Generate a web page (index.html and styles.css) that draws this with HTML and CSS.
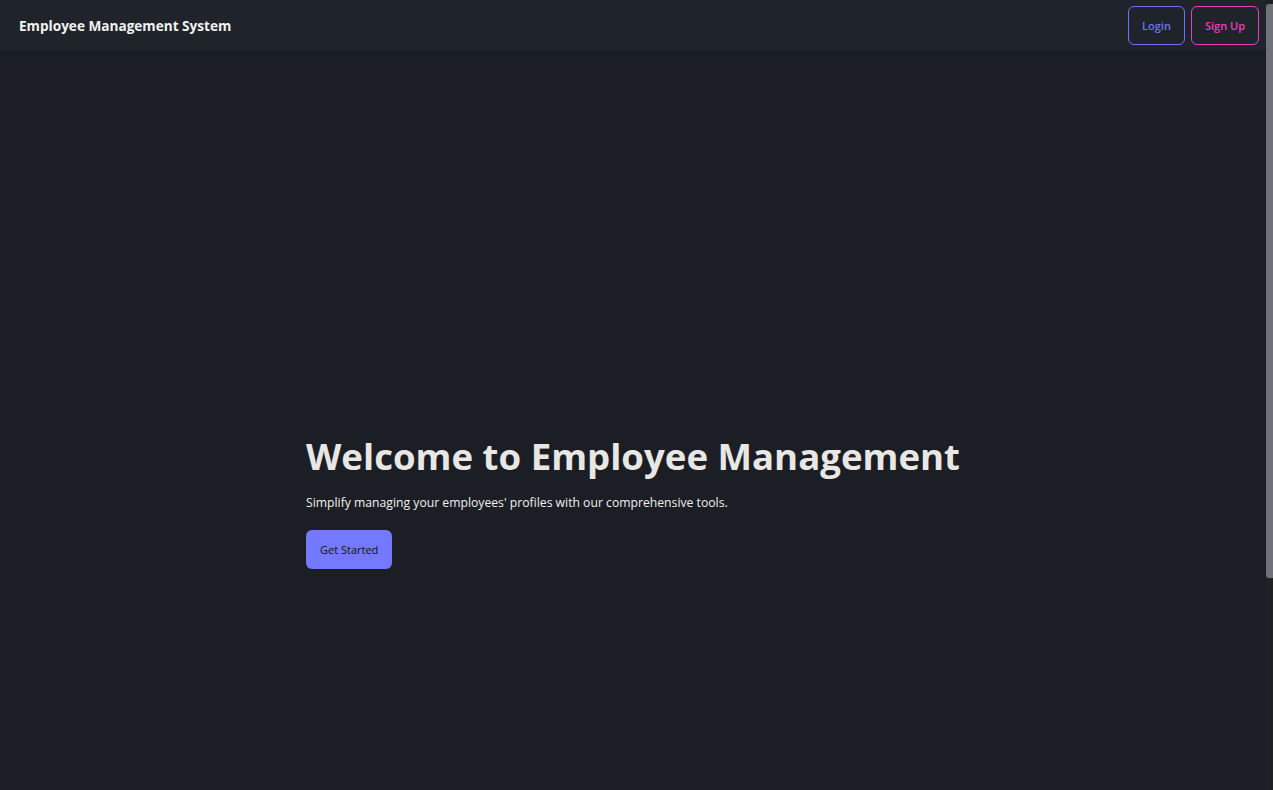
FILE: index.html
```html
<!DOCTYPE html>
<html lang="en">
<head>
<meta charset="utf-8">
<title>Employee Management System</title>
<link rel="stylesheet" href="styles.css">
</head>
<body>
<div class="app">
  <div class="page">
    <nav class="navbar">
      <div class="brand">Employee Management System</div>
      <div class="nav-actions">
        <button class="btn-outline btn-login">Login</button>
        <button class="btn-outline btn-signup">Sign Up</button>
      </div>
    </nav>
    <main class="hero">
      <div class="hero-content">
        <h1 class="hero-title">Welcome to Employee Management</h1>
        <p class="hero-text">Simplify managing your employees' profiles with our comprehensive tools.</p>
        <button class="btn-primary">Get Started</button>
      </div>
    </main>
  </div>
  <div class="scrollbar" aria-hidden="true"><div class="scroll-thumb"></div></div>
</div>
</body>
</html>
```

FILE: styles.css
```css
html, body {
  margin: 0;
  padding: 0;
  height: 100%;
  overflow: hidden;
}
body {
  background: #1b1e25;
  color: #e8e6e3;
  font-family: "Open Sans", "Noto Sans", sans-serif;
}
.app {
  display: flex;
  height: 100vh;
}
.page {
  flex: 1;
  min-width: 0;
  overflow: hidden;
}
.scrollbar {
  width: 7px;
  background: #1f2023;
  padding: 4px 0 0 0;
  box-sizing: border-box;
}
.scroll-thumb {
  height: 574px;
  background: #6f7176;
  border-radius: 3px 0 0 3px;
}
.navbar {
  height: 50px;
  box-sizing: border-box;
  background: #1f232a;
  display: flex;
  align-items: center;
  justify-content: space-between;
  padding: 0 7px 0 19px;
}
.brand {
  font-size: 13.6px;
  font-weight: 700;
  color: #f2f2f2;
}
.nav-actions {
  display: flex;
  gap: 6px;
}
.btn-outline {
  height: 39px;
  background: transparent;
  border: 1px solid;
  border-radius: 6px;
  font-family: inherit;
  font-size: 11px;
  font-weight: 600;
  padding: 0 13px;
  cursor: pointer;
}
.btn-login {
  color: #6c72ff;
  border-color: #6c72ff;
}
.btn-signup {
  color: #ec3fc0;
  border-color: #ec3fc0;
}
.hero {
  display: flex;
  justify-content: center;
  padding-top: 380px;
}
.hero-content {
  display: flex;
  flex-direction: column;
  align-items: flex-start;
}
.hero-title {
  margin: 0;
  font-size: 36.6px;
  font-weight: 700;
  line-height: 52px;
  color: #e9e7e4;
}
.hero-text {
  margin: 12px 0 18px;
  font-size: 12.2px;
  line-height: 18px;
  color: #f0f0f0;
}
.btn-primary {
  height: 39px;
  padding: 0 14px;
  background: #7479ff;
  color: #111318;
  border: none;
  border-radius: 6px;
  font-family: inherit;
  font-size: 11px;
  cursor: pointer;
}
```
